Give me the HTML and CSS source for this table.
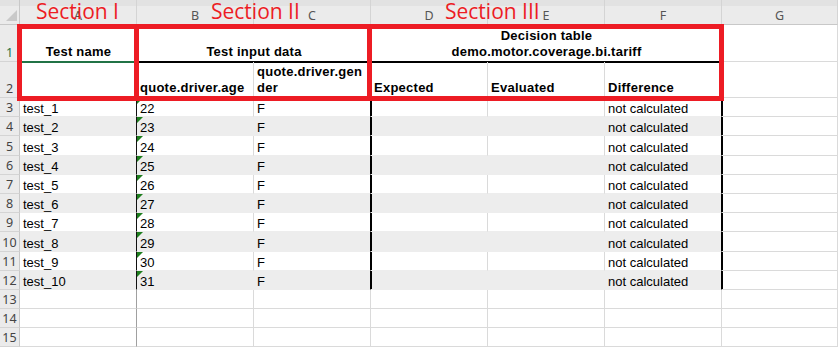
FILE: index.html
```html
<!DOCTYPE html>
<html>
<head>
<meta charset="utf-8">
<link rel="stylesheet" href="styles.css">
</head>
<body>
<div class="wrap">
  <div class="sheet">
    <div class="corner"><svg width="20" height="25" viewBox="0 0 20 25"><polygon points="17,10 17,21 6,21" fill="#c9c9c9"/></svg></div>
    <div class="ch">A</div><div class="ch">B</div><div class="ch">C</div><div class="ch">D</div><div class="ch">E</div><div class="ch">F</div><div class="ch">G</div>

    <div class="rh sel">1</div>
    <div class="c hd ctr a1">Test name</div>
    <div class="c hd ctr span2 blk">Test input data</div>
    <div class="c hd ctr span3 blk">Decision table<br>demo.motor.coverage.bi.tariff</div>
    <div class="c"></div>

    <div class="rh">2</div>
    <div class="c hd a2"></div>
    <div class="c hd top">quote.driver.age</div>
    <div class="c hd top">quote.driver.gen<br>der</div>
    <div class="c hd top">Expected</div>
    <div class="c hd top">Evaluated</div>
    <div class="c hd top">Difference</div>
    <div class="c"></div>

    <div class="rh">3</div><div class="c d ca">test_1</div><div class="c d tri">22</div><div class="c d cc">F</div><div class="c d cd"></div><div class="c d"></div><div class="c d cf">not calculated</div><div class="c cg"></div>
    <div class="rh">4</div><div class="c d gr ca">test_2</div><div class="c d gr tri">23</div><div class="c d gr cc">F</div><div class="c d gr cd"></div><div class="c d gr"></div><div class="c d gr cf">not calculated</div><div class="c cg"></div>
    <div class="rh">5</div><div class="c d ca">test_3</div><div class="c d tri">24</div><div class="c d cc">F</div><div class="c d cd"></div><div class="c d"></div><div class="c d cf">not calculated</div><div class="c cg"></div>
    <div class="rh">6</div><div class="c d gr ca">test_4</div><div class="c d gr tri">25</div><div class="c d gr cc">F</div><div class="c d gr cd"></div><div class="c d gr"></div><div class="c d gr cf">not calculated</div><div class="c cg"></div>
    <div class="rh">7</div><div class="c d ca">test_5</div><div class="c d tri">26</div><div class="c d cc">F</div><div class="c d cd"></div><div class="c d"></div><div class="c d cf">not calculated</div><div class="c cg"></div>
    <div class="rh">8</div><div class="c d gr ca">test_6</div><div class="c d gr tri">27</div><div class="c d gr cc">F</div><div class="c d gr cd"></div><div class="c d gr"></div><div class="c d gr cf">not calculated</div><div class="c cg"></div>
    <div class="rh">9</div><div class="c d ca">test_7</div><div class="c d tri">28</div><div class="c d cc">F</div><div class="c d cd"></div><div class="c d"></div><div class="c d cf">not calculated</div><div class="c cg"></div>
    <div class="rh">10</div><div class="c d gr ca">test_8</div><div class="c d gr tri">29</div><div class="c d gr cc">F</div><div class="c d gr cd"></div><div class="c d gr"></div><div class="c d gr cf">not calculated</div><div class="c cg"></div>
    <div class="rh">11</div><div class="c d ca">test_9</div><div class="c d tri">30</div><div class="c d cc">F</div><div class="c d cd"></div><div class="c d"></div><div class="c d cf">not calculated</div><div class="c cg"></div>
    <div class="rh">12</div><div class="c d gr ca">test_10</div><div class="c d gr tri">31</div><div class="c d gr cc">F</div><div class="c d gr cd"></div><div class="c d gr"></div><div class="c d gr cf">not calculated</div><div class="c cg"></div>

    <div class="rh">13</div><div class="c fz"></div><div class="c"></div><div class="c"></div><div class="c"></div><div class="c"></div><div class="c"></div><div class="c"></div>
    <div class="rh">14</div><div class="c fz"></div><div class="c"></div><div class="c"></div><div class="c"></div><div class="c"></div><div class="c"></div><div class="c"></div>
    <div class="rh">15</div><div class="c fz"></div><div class="c"></div><div class="c"></div><div class="c"></div><div class="c"></div><div class="c"></div><div class="c"></div>
  </div>

  <div class="box box1"></div>
  <div class="box box2"></div>
  <div class="box box3"></div>
  <div class="sec s1">Section I</div>
  <div class="sec s2">Section II</div>
  <div class="sec s3">Section III</div>
</div>
</body>
</html>
```

FILE: styles.css
```css
html, body {
  margin: 0;
  padding: 0;
  background: #ffffff;
}

.wrap {
  position: relative;
  width: 838px;
  height: 348px;
  overflow: hidden;
}

.sheet {
  display: grid;
  grid-template-columns: 20px repeat(6, 117px) 116px;
  grid-template-rows: 25px 37px 36px repeat(13, 19.2px);
  font-family: "Liberation Sans", Arial, sans-serif;
  font-size: 13px;
  color: #000;
}

.corner {
  background: linear-gradient(#e2e2e2 0 6px, #ebebeb 6px);
  border-right: 1px solid #c8c8c8;
  border-bottom: 1px solid #c8c8c8;
  box-sizing: border-box;
}
.corner svg { display: block; }

.ch {
  box-sizing: border-box;
  background: linear-gradient(#e2e2e2 0 6px, #ebebeb 6px);
  border-right: 1px solid #d4d4d4;
  border-bottom: 1px solid #c8c8c8;
  display: flex;
  align-items: center;
  justify-content: center;
  padding-top: 7px;
  font-family: "Noto Sans", "Open Sans", sans-serif;
  font-size: 12.5px;
  color: #555;
}

.rh {
  box-sizing: border-box;
  background: #ebebeb;
  border-right: 1px solid #c8c8c8;
  border-bottom: 1px solid #d4d4d4;
  display: flex;
  align-items: flex-end;
  justify-content: center;
  font-family: "Noto Sans", "Open Sans", sans-serif;
  font-size: 12.5px;
  line-height: 17px;
  color: #444;
}
.rh.sel { color: #217346; }

.c {
  box-sizing: border-box;
  position: relative;
  border-right: 1px solid #dadada;
  border-bottom: 1px solid #dadada;
  display: flex;
  align-items: flex-end;
  padding: 0 2px 0 3px;
  line-height: 14px;
  white-space: nowrap;
  overflow: hidden;
}

.hd {
  font-weight: bold;
  line-height: 16px;
  padding-bottom: 1px;
  letter-spacing: 0.25px;
}
.ctr {
  justify-content: center;
  text-align: center;
}
.span2 { grid-column: span 2; }
.span3 { grid-column: span 3; }

.blk { border-bottom: 1px solid #000; }
.top { box-shadow: inset 0 1px 0 #000; }
.a1 { border-bottom: 1px solid #217346; }
.a2 { box-shadow: inset 0 1px 0 #217346; }

.d { border-bottom-color: #ededed; }
.gr {
  background: #ededed;
  border-right-color: #ededed;
}
.ca { border-right-color: #111; }
.cc { border-right-color: #000; }
.cd { box-shadow: inset 1px 0 0 #000; }
.cf { border-right-color: #000; }
.cg { box-shadow: inset 1px 0 0 #000; }
.fz { border-right-color: #a0a0a0; }

.tri::before {
  content: "";
  position: absolute;
  left: 0;
  top: 0;
  width: 0;
  height: 0;
  border-style: solid;
  border-width: 6px 6px 0 0;
  border-color: #1e7e1e transparent transparent transparent;
}

.box {
  position: absolute;
  box-sizing: border-box;
  border: 5px solid #ed1c24;
  top: 24px;
  height: 77px;
}
.box1 { left: 17px; width: 122px; }
.box2 { left: 134px; width: 238px; }
.box3 { left: 367px; width: 357px; }

.sec {
  position: absolute;
  top: 1px;
  font-family: "Open Sans", "Noto Sans", sans-serif;
  font-size: 21px;
  line-height: 21px;
  color: #ed1c24;
  white-space: nowrap;
}
.s1 { left: 36px; }
.s2 { left: 211px; }
.s3 { left: 445px; }
```
